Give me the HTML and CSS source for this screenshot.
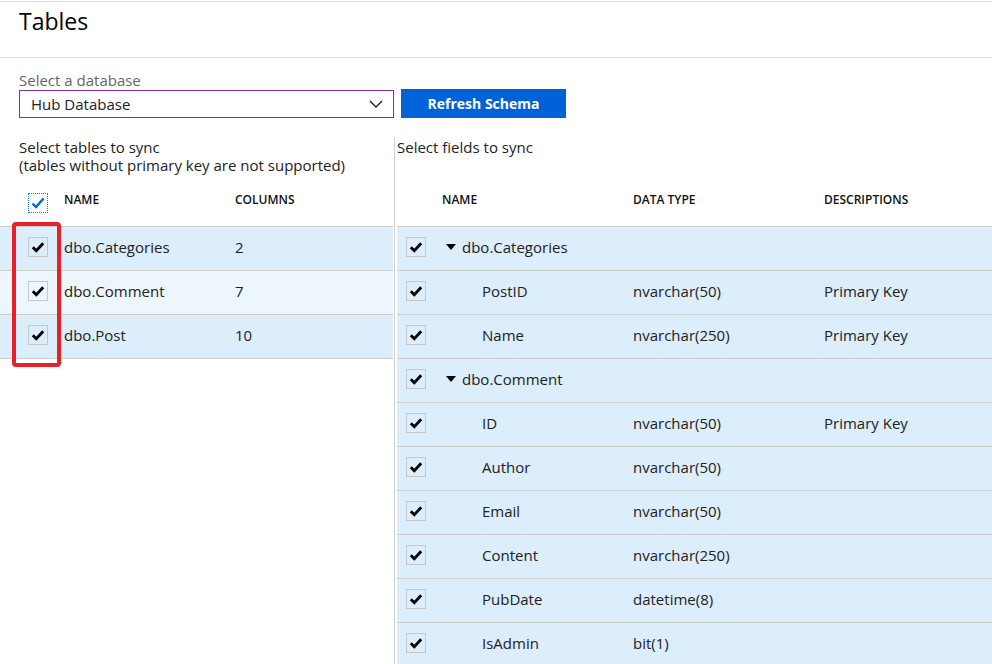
FILE: index.html
```html
<!DOCTYPE html>
<html>
<head>
<meta charset="utf-8">
<link rel="stylesheet" href="styles.css">
</head>
<body>
<div class="page">
  <header class="top">
    <h1 class="title">Tables</h1>
  </header>

  <section class="db">
    <div class="db-label">Select a database</div>
    <div class="db-row">
      <div class="select">
        <span>Hub Database</span>
        <svg class="chev" width="14" height="8" viewBox="0 0 14 8"><path d="M1 1 L7 7 L13 1" fill="none" stroke="#222" stroke-width="1.4"/></svg>
      </div>
      <button class="btn">Refresh Schema</button>
    </div>
  </section>

  <div class="panels">
    <div class="left">
      <div class="intro">Select tables to sync<br>(tables without primary key are not supported)</div>
      <div class="lrow lhead">
        <span class="cb cb-focus"><svg width="16" height="14" viewBox="0 0 16 14"><path d="M2.5 7.5 L6 11 L13.5 2.5" fill="none" stroke="#0063dc" stroke-width="2.4"/></svg></span>
        <span>NAME</span>
        <span>COLUMNS</span>
      </div>
      <div class="lrow sel">
        <span class="cb"><svg width="16" height="14" viewBox="0 0 16 14"><path d="M2.8 7.3 L6.3 10.8 L13.2 3.3" fill="none" stroke="#000" stroke-width="2.8"/></svg></span>
        <span>dbo.Categories</span>
        <span>2</span>
      </div>
      <div class="lrow hover">
        <span class="cb"><svg width="16" height="14" viewBox="0 0 16 14"><path d="M2.8 7.3 L6.3 10.8 L13.2 3.3" fill="none" stroke="#000" stroke-width="2.8"/></svg></span>
        <span>dbo.Comment</span>
        <span>7</span>
      </div>
      <div class="lrow sel">
        <span class="cb"><svg width="16" height="14" viewBox="0 0 16 14"><path d="M2.8 7.3 L6.3 10.8 L13.2 3.3" fill="none" stroke="#000" stroke-width="2.8"/></svg></span>
        <span>dbo.Post</span>
        <span>10</span>
      </div>
      <div class="highlight"></div>
    </div>

    <div class="right">
      <div class="intro">Select fields to sync</div>
      <div class="rrow rhead">
        <span></span>
        <span>NAME</span>
        <span>DATA TYPE</span>
        <span>DESCRIPTIONS</span>
      </div>
      <div class="rrow">
        <span class="cb"><svg width="16" height="14" viewBox="0 0 16 14"><path d="M2.8 7.3 L6.3 10.8 L13.2 3.3" fill="none" stroke="#000" stroke-width="2.8"/></svg></span>
        <span class="group"><i class="tri"></i>dbo.Categories</span>
        <span></span><span></span>
      </div>
      <div class="rrow">
        <span class="cb"><svg width="16" height="14" viewBox="0 0 16 14"><path d="M2.8 7.3 L6.3 10.8 L13.2 3.3" fill="none" stroke="#000" stroke-width="2.8"/></svg></span>
        <span class="child">PostID</span>
        <span>nvarchar(50)</span>
        <span>Primary Key</span>
      </div>
      <div class="rrow">
        <span class="cb"><svg width="16" height="14" viewBox="0 0 16 14"><path d="M2.8 7.3 L6.3 10.8 L13.2 3.3" fill="none" stroke="#000" stroke-width="2.8"/></svg></span>
        <span class="child">Name</span>
        <span>nvarchar(250)</span>
        <span>Primary Key</span>
      </div>
      <div class="rrow">
        <span class="cb"><svg width="16" height="14" viewBox="0 0 16 14"><path d="M2.8 7.3 L6.3 10.8 L13.2 3.3" fill="none" stroke="#000" stroke-width="2.8"/></svg></span>
        <span class="group"><i class="tri"></i>dbo.Comment</span>
        <span></span><span></span>
      </div>
      <div class="rrow">
        <span class="cb"><svg width="16" height="14" viewBox="0 0 16 14"><path d="M2.8 7.3 L6.3 10.8 L13.2 3.3" fill="none" stroke="#000" stroke-width="2.8"/></svg></span>
        <span class="child">ID</span>
        <span>nvarchar(50)</span>
        <span>Primary Key</span>
      </div>
      <div class="rrow">
        <span class="cb"><svg width="16" height="14" viewBox="0 0 16 14"><path d="M2.8 7.3 L6.3 10.8 L13.2 3.3" fill="none" stroke="#000" stroke-width="2.8"/></svg></span>
        <span class="child">Author</span>
        <span>nvarchar(50)</span>
        <span></span>
      </div>
      <div class="rrow">
        <span class="cb"><svg width="16" height="14" viewBox="0 0 16 14"><path d="M2.8 7.3 L6.3 10.8 L13.2 3.3" fill="none" stroke="#000" stroke-width="2.8"/></svg></span>
        <span class="child">Email</span>
        <span>nvarchar(50)</span>
        <span></span>
      </div>
      <div class="rrow">
        <span class="cb"><svg width="16" height="14" viewBox="0 0 16 14"><path d="M2.8 7.3 L6.3 10.8 L13.2 3.3" fill="none" stroke="#000" stroke-width="2.8"/></svg></span>
        <span class="child">Content</span>
        <span>nvarchar(250)</span>
        <span></span>
      </div>
      <div class="rrow">
        <span class="cb"><svg width="16" height="14" viewBox="0 0 16 14"><path d="M2.8 7.3 L6.3 10.8 L13.2 3.3" fill="none" stroke="#000" stroke-width="2.8"/></svg></span>
        <span class="child">PubDate</span>
        <span>datetime(8)</span>
        <span></span>
      </div>
      <div class="rrow">
        <span class="cb"><svg width="16" height="14" viewBox="0 0 16 14"><path d="M2.8 7.3 L6.3 10.8 L13.2 3.3" fill="none" stroke="#000" stroke-width="2.8"/></svg></span>
        <span class="child">IsAdmin</span>
        <span>bit(1)</span>
        <span></span>
      </div>
    </div>
  </div>
</div>
</body>
</html>
```
FILE: styles.css
```css
* { box-sizing: border-box; }
html, body { margin: 0; padding: 0; background: #fff; }
body {
  font-family: "Segoe UI", "Open Sans", "Noto Sans", sans-serif;
  color: #222;
  font-size: 15px;
  overflow: hidden;
  height: 664px;
}
.page { padding-top: 1px; }
.top {
  height: 57px;
  border-top: 1px solid #dcdcdc;
  border-bottom: 1px solid #dcdcdc;
  padding-left: 19px;
}
.title {
  margin: 0;
  font-size: 23px;
  font-weight: 400;
  line-height: 38px;
  color: #000;
}
.db { padding: 13px 0 0 19px; }
.db-label { font-size: 15px; line-height: 18px; color: #666; margin-bottom: 1px; }
.db-row { display: flex; align-items: center; gap: 7px; }
.select {
  width: 375px;
  height: 28px;
  border: 1px solid #8b2ea8;
  display: flex;
  align-items: center;
  justify-content: space-between;
  padding: 0 10px 0 11px;
  font-size: 15px;
  color: #222;
}
.btn {
  width: 165px;
  height: 29px;
  border: 0;
  background: #0062d9;
  color: #fff;
  font-family: inherit;
  font-size: 14px;
  font-weight: 700;
  padding: 0;
  margin-top: -1px;
}
.panels { display: flex; margin-top: 19px; }
.left {
  width: 395px;
  border-right: 1px solid #cfcfcf;
  position: relative;
  flex: none;
}
.right { flex: 1; margin-left: 2px; min-width: 0; }
.intro {
  height: 43px;
  padding: 1px 0 0 19px;
  font-size: 15px;
  line-height: 18px;
  color: #222;
}
.right .intro { padding-left: 0; }
.lrow, .rrow {
  height: 44px;
  border-bottom: 1px solid #cfcfcf;
  display: grid;
  align-items: start;
  padding-top: 10px;
  line-height: 20px;
}
.lrow { grid-template-columns: 36px 171px 1fr; padding-left: 28px; margin-right: 1px; }
.rrow { grid-template-columns: 36px 191px 191px 1fr; padding-left: 9px; background: #dcedfc; }
.lhead, .rhead {
  height: 47px;
  background: #fff;
  font-size: 12px;
  font-weight: 600;
  line-height: 16px;
  color: #111;
  padding-top: 12px;
}
.sel { background: #dcedfc; }
.hover { background: #edf5fd; }
.cb {
  width: 20px;
  height: 20px;
  border: 1px solid #c8c8c8;
  display: flex;
  align-items: center;
  justify-content: center;
}
.cb-focus { border: 1px dotted #1a7fd8; margin-top: 1px; }
.group { display: flex; align-items: center; padding-left: 4px; }
.tri {
  width: 0; height: 0;
  border-left: 5px solid transparent;
  border-right: 5px solid transparent;
  border-top: 6px solid #000;
  margin-right: 6px;
}
.child { padding-left: 40px; }
.highlight {
  position: absolute;
  left: 12px;
  top: 85px;
  width: 49px;
  height: 145px;
  border: 4px solid #e8202a;
  border-radius: 4px;
}
```
